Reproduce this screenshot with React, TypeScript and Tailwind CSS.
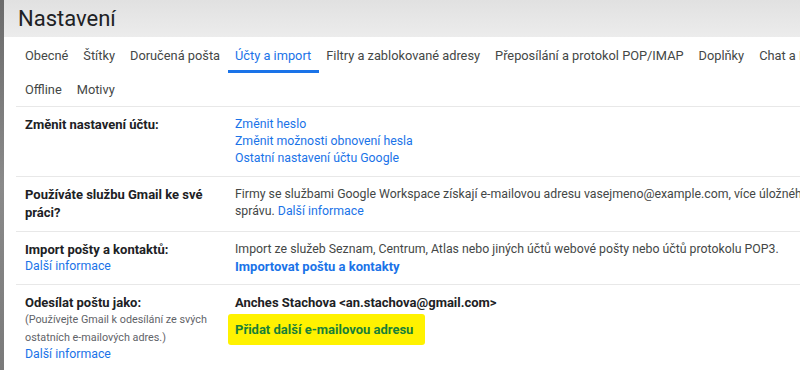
const tabs1 = [
  "Obecné",
  "Štítky",
  "Doručená pošta",
  "Účty a import",
  "Filtry a zablokované adresy",
  "Přeposílání a protokol POP/IMAP",
  "Doplňky",
  "Chat a Meet",
];
const tabs2 = ["Offline", "Motivy"];

function Tab({ label, active, second }: { label: string; active?: boolean; second?: boolean }) {
  if (second) {
    return <div className="px-[7.5px] pt-[8px] pb-[8px] text-[#444746]">{label}</div>;
  }
  return (
    <div
      className={
        "px-[7.5px] pt-[10px] pb-[6px] border-b-[3px] " +
        (active ? "border-[#1a73e8] text-[#1a73e8]" : "border-transparent text-[#444746]")
      }
    >
      {label}
    </div>
  );
}

function Link({ children, bold }: { children: React.ReactNode; bold?: boolean }) {
  return (
    <span className={"text-[#1a73e8] " + (bold ? "font-bold text-[13px]" : "text-[12.3px]")}>{children}</span>
  );
}

function Row({ label, children }: { label: React.ReactNode; children: React.ReactNode }) {
  return (
    <div className="flex border-t border-[#e8e8e8] pt-[9px] pb-[9px]">
      <div className="w-[219px] shrink-0 pl-[9px]">{label}</div>
      <div className="flex-1">{children}</div>
    </div>
  );
}

export default function App() {
  return (
    <div
      className="w-[800px] h-[370px] overflow-hidden flex bg-white whitespace-nowrap"
      style={{ fontFamily: "Roboto, 'Noto Sans', sans-serif" }}
    >
      <div className="w-[4px] shrink-0 bg-gradient-to-b from-[#6b6b6b] via-[#8a8a8a] to-[#7a7a7a]" />
      <div className="flex-1 flex flex-col min-w-0">
        <div className="h-[37px] shrink-0 bg-gradient-to-b from-[#e1e1e1] to-[#ececec] pl-[14px] flex items-center">
          <span className="text-[22px] text-[#202124] leading-none">Nastavení</span>
        </div>
        <div className="pl-[13.5px] text-[12.8px] leading-[17px]">
          <div className="flex">
            {tabs1.map((t) => (
              <Tab key={t} label={t} active={t === "Účty a import"} />
            ))}
          </div>
          <div className="flex">
            {tabs2.map((t) => (
              <Tab key={t} label={t} second />
            ))}
          </div>
        </div>
        <div className="ml-[12px] text-[12.3px] leading-[17px] text-[#202124]">
          <Row label={<span className="font-bold text-[13px]">Změnit nastavení účtu:</span>}>
            <div className="flex flex-col">
              <Link>Změnit heslo</Link>
              <Link>Změnit možnosti obnovení hesla</Link>
              <Link>Ostatní nastavení účtu Google</Link>
            </div>
          </Row>
          <Row
            label={
              <span className="font-bold text-[13px]">
                Používáte službu Gmail ke své
                <br />
                práci?
              </span>
            }
          >
            <div className="text-[#444746]">
              Firmy se službami Google Workspace získají e-mailovou adresu vasejmeno@example.com, více úložného
              prostoru a nástroje pro
              <br />
              správu. <Link>Další informace</Link>
            </div>
          </Row>
          <Row
            label={
              <div className="flex flex-col">
                <span className="font-bold text-[13px]">Import pošty a kontaktů:</span>
                <Link>Další informace</Link>
              </div>
            }
          >
            <div className="flex flex-col">
              <span className="text-[#444746]">
                Import ze služeb Seznam, Centrum, Atlas nebo jiných účtů webové pošty nebo účtů protokolu POP3.
              </span>
              <Link bold>Importovat poštu a kontakty</Link>
            </div>
          </Row>
          <Row
            label={
              <div className="flex flex-col">
                <span className="font-bold text-[13px]">Odesílat poštu jako:</span>
                <span className="text-[10.8px] leading-[18px] text-[#5f6368]">
                  (Používejte Gmail k odesílání ze svých
                </span>
                <span className="text-[10.8px] leading-[17px] text-[#5f6368]">ostatních e-mailových adres.)</span>
                <Link>Další informace</Link>
              </div>
            }
          >
            <div className="flex flex-col items-start">
              <span className="font-bold text-[13px]">Anches Stachova &lt;an.stachova@gmail.com&gt;</span>
              <span className="mt-[3px] -ml-[7px] px-[7px] py-[7px] bg-[#fff200] rounded-[3px] w-[197px] font-bold text-[13px] text-[#188038]">
                Přidat další e-mailovou adresu
              </span>
            </div>
          </Row>
        </div>
      </div>
    </div>
  );
}
